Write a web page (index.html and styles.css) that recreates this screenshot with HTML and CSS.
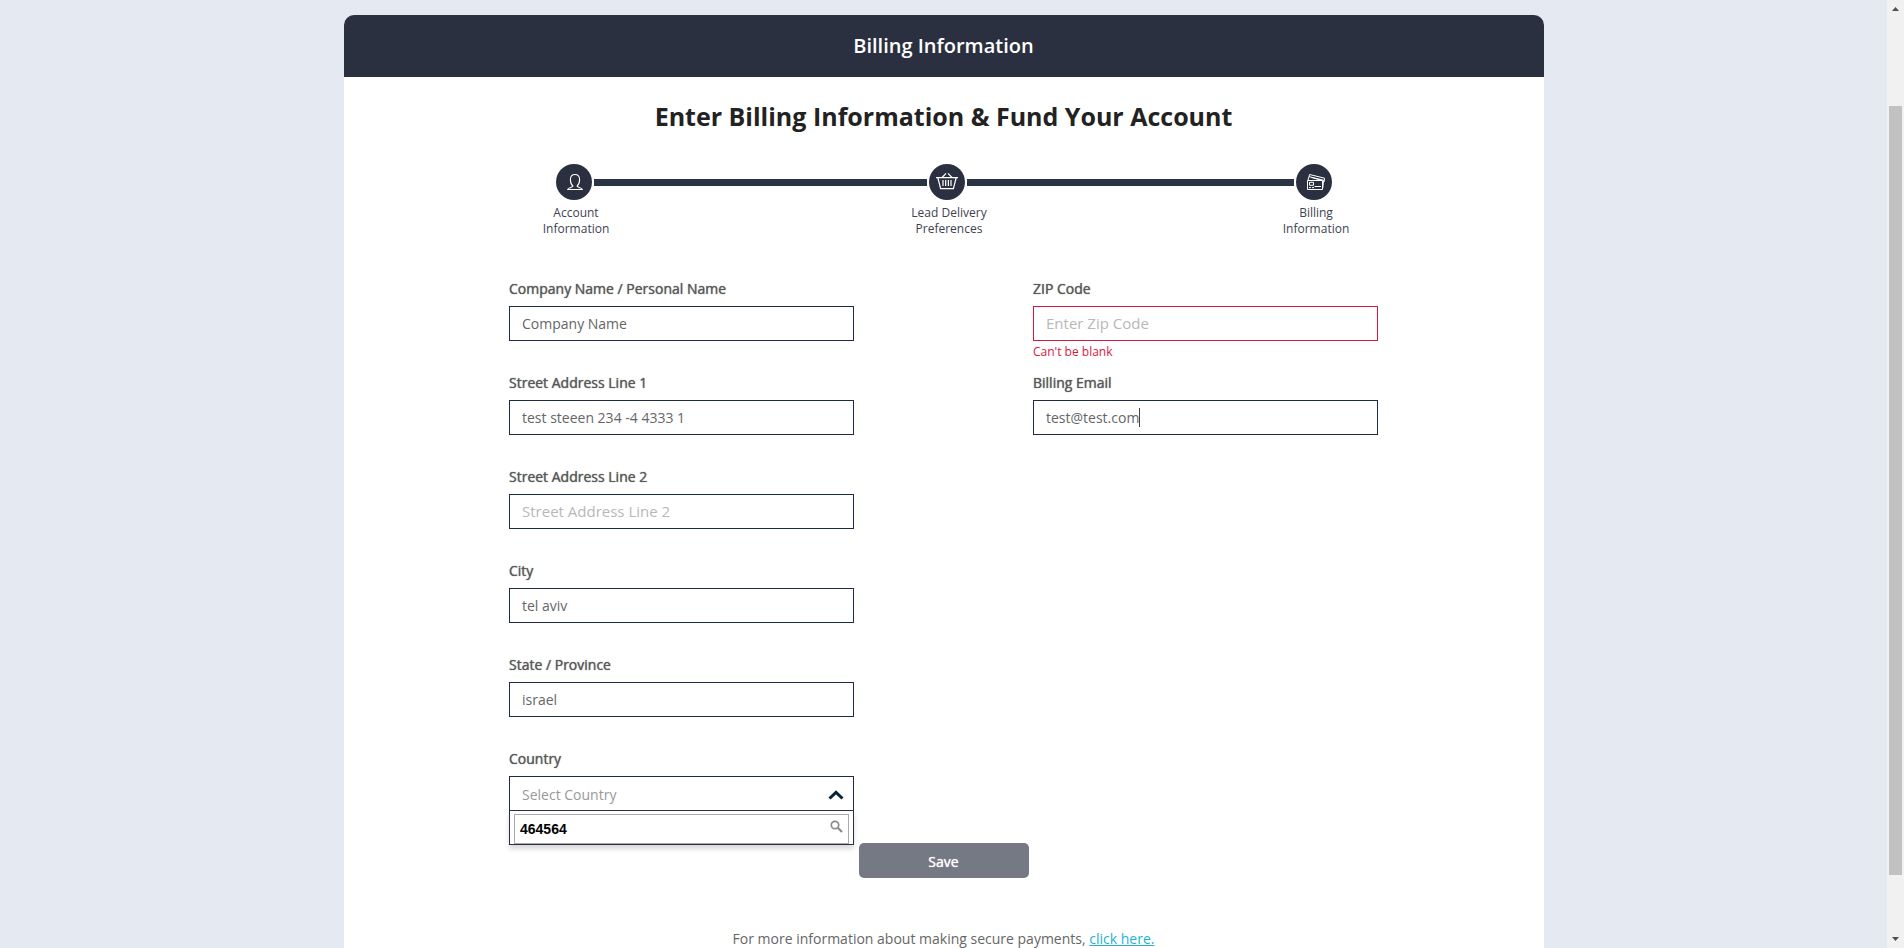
FILE: index.html
```html
<!DOCTYPE html>
<html lang="en">
<head>
<meta charset="utf-8">
<title>Billing Information</title>
<link rel="stylesheet" href="styles.css">
</head>
<body>
<main class="page">
  <section class="card">
    <header class="card-header"><h1 class="card-title">Billing Information</h1></header>
    <h2 class="heading">Enter Billing Information &amp; Fund Your Account</h2>

    <ol class="steps">
      <li class="step">
        <span class="step-dot">
          <svg width="36" height="36" viewBox="0 0 36 36" fill="none" stroke="#fff" stroke-width="1.1" stroke-linejoin="round" aria-hidden="true">
            <path d="M17 22.200C15.200 20.800 14.400 18.400 14.400 15.600C14.400 12.400 16.200 10.500 19 10.500S23.600 12.400 23.600 15.600C23.600 18.400 22.800 20.800 21 22.200C21.300 23.400 26 23.600 26.400 25.500H11.600C12 23.600 16.700 23.400 17 22.200Z"/>
          </svg>
        </span>
        <span class="step-label">Account<br>Information</span>
      </li>
      <li class="step-line step-line-done"></li>
      <li class="step">
        <span class="step-dot">
          <svg width="36" height="36" viewBox="0 0 36 36" fill="none" stroke="#fff" stroke-width="1.2" aria-hidden="true">
            <path d="M7 13.700H29M13 13.500L17 9.300M23 13.500L19 9.300M8.900 14L11.600 24.600H24.400L27.100 14M14 16V22M16.700 16V22M19.400 16V22M22 16V22"/>
          </svg>
        </span>
        <span class="step-label">Lead Delivery<br>Preferences</span>
      </li>
      <li class="step-line"></li>
      <li class="step">
        <span class="step-dot">
          <svg width="36" height="36" viewBox="0 0 36 36" fill="none" stroke="#fff" stroke-width="1" stroke-linejoin="round" aria-hidden="true">
            <path d="M11.500 16.500H26.500V25.500H11.500ZM12 16L13 12.600L27.500 16.200L26.800 24M13 12.600L13.600 10.500L28.600 14.200L28 18M15.500 13.500L24 16M13.500 18.300H17.500V21.300H13.500ZM18.500 22.500H25M13 23.600H15M16 23.600H18"/>
          </svg>
        </span>
        <span class="step-label">Billing<br>Information</span>
      </li>
    </ol>

    <form class="form">
      <div class="columns">
        <div class="column">
          <div class="field">
            <label class="label" for="company">Company Name / Personal Name</label>
            <input class="input" id="company" type="text" value="Company Name">
          </div>
          <div class="field">
            <label class="label" for="street1">Street Address Line 1</label>
            <input class="input" id="street1" type="text" value="test steeen 234 -4 4333 1">
          </div>
          <div class="field">
            <label class="label" for="street2">Street Address Line 2</label>
            <input class="input" id="street2" type="text" placeholder="Street Address Line 2">
          </div>
          <div class="field">
            <label class="label" for="city">City</label>
            <input class="input" id="city" type="text" value="tel aviv">
          </div>
          <div class="field">
            <label class="label" for="state">State / Province</label>
            <input class="input" id="state" type="text" value="israel">
          </div>
          <div class="field">
            <label class="label" for="country">Country</label>
            <div class="select-wrap">
              <select class="input select" id="country"><option>Select Country</option></select>
              <svg class="chevron" width="16" height="10" viewBox="0 0 16 10" fill="none" stroke="#06243b" stroke-width="3" aria-hidden="true"><path d="M1.500 8.500L8 2.300L14.500 8.500"/></svg>
              <div class="dropdown">
                <input class="search" type="text" value="464564" aria-label="Search country">
                <svg class="search-icon" width="13" height="13" viewBox="0 0 13 13" fill="none" stroke="#8a8a8a" aria-hidden="true"><circle cx="5" cy="5" r="3.700" stroke-width="1.700"/><path d="M7.800 7.800L12 12" stroke-width="2.200"/></svg>
              </div>
            </div>
          </div>
        </div>
        <div class="column">
          <div class="field">
            <label class="label" for="zip">ZIP Code</label>
            <input class="input input-error" id="zip" type="text" placeholder="Enter Zip Code" aria-describedby="zip-error">
            <p class="error" id="zip-error">Can't be blank</p>
          </div>
          <div class="field">
            <label class="label" for="email">Billing Email</label>
            <div class="email-wrap">
              <input class="input" id="email" type="text" value="test@test.com">
              <span class="caret"></span>
            </div>
          </div>
        </div>
      </div>
      <button class="save" type="button">Save</button>
    </form>
    <p class="note">For more information about making secure payments, <a class="link" href="#">click here.</a></p>
  </section>
</main>
<div class="scrollbar" aria-hidden="true">
  <svg class="arrow" width="17" height="17" viewBox="0 0 17 17" fill="#505050"><path d="M5 11L8.500 7L12 11Z"/></svg>
  <div class="track-top"></div>
  <div class="thumb"></div>
  <div class="track-bottom"></div>
  <svg class="arrow" width="17" height="17" viewBox="0 0 17 17" fill="#505050"><path d="M5 6L8.500 10L12 6Z"/></svg>
</div>
</body>
</html>
```

FILE: styles.css
```css
* { box-sizing: border-box; }

body {
  display: flex;
  height: 100vh;
  margin: 0;
  overflow: hidden;
  background: #e4e9f2;
  color: #666;
  font-family: "Open Sans", "Noto Sans", sans-serif;
  font-size: 14px;
}

.page {
  display: flex;
  flex: 1;
  justify-content: center;
  padding: 15px 16px 0;
  overflow: hidden;
}

.card {
  display: flex;
  flex-direction: column;
  flex: 0 1 1200px;
  align-self: flex-start;
  padding-bottom: 40px;
  background: #fff;
  border-radius: 10px;
}

.card-header {
  padding: 16px;
  background: #2b3040;
  border-radius: 10px 10px 0 0;
  text-align: center;
}

.card-title {
  margin: 0;
  color: #fff;
  font-size: 20px;
  font-weight: 600;
  line-height: 30px;
}

.heading {
  margin: 21px 0 0;
  color: #222;
  font-size: 25px;
  font-weight: 700;
  line-height: 36px;
  text-align: center;
}

.steps {
  display: flex;
  width: 66%;
  margin: 30px auto 0;
  padding: 0 8px;
  list-style: none;
}

.step {
  display: flex;
  flex-direction: column;
  align-items: center;
  width: 36px;
}

.step-dot {
  height: 36px;
  background: #2b3040;
  border-radius: 50%;
}

.step-dot svg { display: block; }

.step-label {
  padding: 5px 0 0 5px;
  color: #3d4250;
  font-size: 12px;
  line-height: 16px;
  text-align: center;
  white-space: nowrap;
}

.step-line {
  flex: 327;
  height: 7px;
  margin: 15px 2px 0;
  background: #2b3442;
}

.step-line-done { flex-grow: 333; }

.form {
  display: flex;
  flex-direction: column;
  align-items: center;
  margin-top: 42px;
}

.columns {
  display: flex;
  justify-content: space-between;
  width: 100%;
  max-width: 869px;
}

.column { width: 345px; }

.field { height: 94px; }

.label {
  display: block;
  padding-bottom: 7px;
  color: #595959;
  font-size: 14px;
  line-height: 20px;
  text-shadow: 0 0 1px currentColor;
}

.input {
  display: block;
  width: 100%;
  height: 35px;
  padding: 0 12px;
  border: 1px solid #1f2b45;
  border-radius: 0;
  outline: 0;
  background: #fff;
  color: #666;
  font: 14px "Open Sans", "Noto Sans", sans-serif;
}

.input::placeholder {
  color: #b8b8b8;
  font-size: 15px;
  opacity: 1;
}

.input-error { border-color: #d6183f; }

.error {
  margin: 3px 0 0;
  color: #d6183f;
  font-size: 12px;
  line-height: 16px;
}

.email-wrap,
.select-wrap { position: relative; }

.caret {
  position: absolute;
  top: 8px;
  left: 106px;
  width: 1px;
  height: 19px;
  background: #444;
}

.select {
  padding-top: 2px;
  appearance: none;
  color: #999;
}

.chevron {
  position: absolute;
  top: 14px;
  right: 10px;
}

.dropdown {
  position: absolute;
  top: 34px;
  right: 0;
  left: 0;
  padding: 3px 4px 0;
  border: 1px solid #2b3040;
  background: #fff;
  box-shadow: 0 4px 5px rgba(0, 0, 0, 0.15);
}

.search {
  display: block;
  width: 100%;
  height: 30px;
  padding: 0 5px;
  border: 1px solid #aaa;
  outline: 0;
  color: #000;
  font: bold 14px "Liberation Sans", Arial, sans-serif;
}

.search-icon {
  position: absolute;
  top: 9px;
  right: 10px;
}

.save {
  width: 170px;
  height: 35px;
  padding: 2px 0 0;
  border: 0;
  border-radius: 5px;
  background: #757983;
  color: #fff;
  font: 14px "Open Sans", "Noto Sans", sans-serif;
  text-shadow: 0 0 1px currentColor;
}

.note {
  margin: 51px 0 0;
  line-height: 20px;
  text-align: center;
}

.link { color: #1fb2d6; }

.scrollbar {
  display: flex;
  flex-direction: column;
  flex: 0 0 17px;
  background: #f1f1f1;
}

.arrow { flex: none; }

.track-top { flex: 89; }

.thumb {
  flex: 769;
  margin: 0 2px;
  background: #c1c1c1;
}

.track-bottom { flex: 56; }
```
